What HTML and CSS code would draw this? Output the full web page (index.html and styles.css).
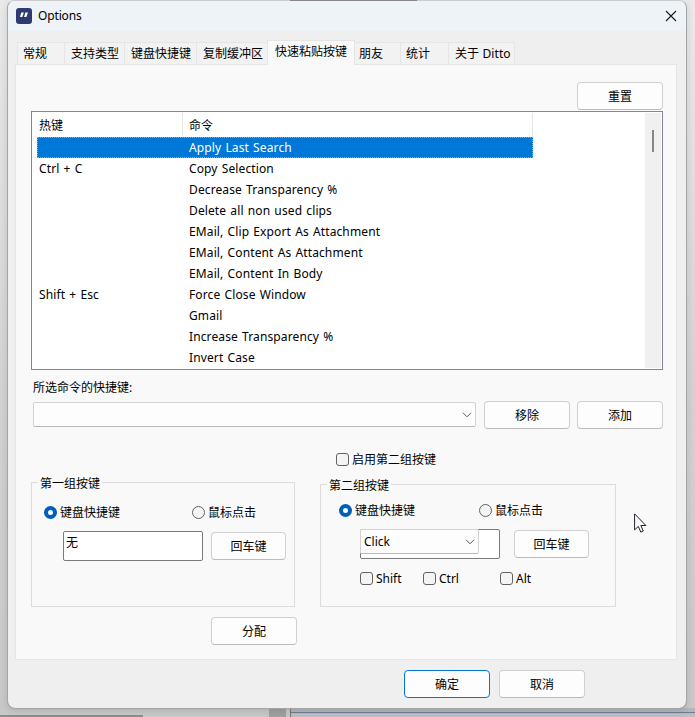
FILE: index.html
```html
<!DOCTYPE html>
<html lang="zh-CN">
<head>
<meta charset="utf-8">
<title>Options</title>
<link rel="stylesheet" href="styles.css">
</head>
<body>
<div class="backdrop"><i class="back-top"></i><i class="back-scroll"></i><i class="back-block"></i><i class="back-pane"></i></div>
<div class="window">
  <header class="titlebar">
    <svg class="logo" width="16" height="16" viewBox="0 0 16 16"><rect width="16" height="16" rx="3" fill="#2f3a72"/><path d="M5.2 4.5h2.7L6.3 9H4zM9.3 4.5H12L10.4 9H8.1z" fill="#fff"/></svg>
    <span class="title">Options</span>
    <svg class="close" width="12" height="12" viewBox="0 0 12 12"><path d="M1 1l10 10M11 1L1 11" stroke="#1a1a1a" stroke-width="1.1" fill="none"/></svg>
  </header>
  <nav class="tabs">
    <span class="tab t1">常规</span><span class="tab t2">支持类型</span><span class="tab t3">键盘快捷键</span><span class="tab t4">复制缓冲区</span><span class="tab active">快速粘贴按键</span><span class="tab t6">朋友</span><span class="tab t7">统计</span><span class="tab t8">关于 Ditto</span>
  </nav>
  <main class="panel">
    <div class="reset"><button class="btn">重置</button></div>
    <section class="list">
      <div class="table">
        <div class="row head"><span>热键</span><span>命令</span></div>
        <div class="row selected"><span></span><span>Apply Last Search</span></div>
        <div class="row"><span>Ctrl + C</span><span>Copy Selection</span></div>
        <div class="row"><span></span><span>Decrease Transparency %</span></div>
        <div class="row"><span></span><span>Delete all non used clips</span></div>
        <div class="row"><span></span><span>EMail, Clip Export As Attachment</span></div>
        <div class="row"><span></span><span>EMail, Content As Attachment</span></div>
        <div class="row"><span></span><span>EMail, Content In Body</span></div>
        <div class="row"><span>Shift + Esc</span><span>Force Close Window</span></div>
        <div class="row"><span></span><span>Gmail</span></div>
        <div class="row"><span></span><span>Increase Transparency %</span></div>
        <div class="row"><span></span><span>Invert Case</span></div>
      </div>
      <div class="scrollbar"><div class="thumb"></div></div>
    </section>
    <div class="label">所选命令的快捷键:</div>
    <div class="shortcut">
      <div class="combo wide"><svg width="10" height="6" viewBox="0 0 10 6"><path d="M1 .8l4 4 4-4" fill="none" stroke="#555"/></svg></div>
      <button class="btn">移除</button>
      <button class="btn">添加</button>
    </div>
    <label class="option enable"><i class="check"></i><span>启用第二组按键</span></label>
    <div class="groups">
      <section class="group first">
        <h2>第一组按键</h2>
        <div class="radios"><label class="option"><i class="radio on"></i><span>键盘快捷键</span></label><label class="option"><i class="radio"></i><span>鼠标点击</span></label></div>
        <div class="entry"><div class="edit">无</div><button class="btn small">回车键</button></div>
      </section>
      <section class="group second">
        <h2>第二组按键</h2>
        <div class="radios"><label class="option"><i class="radio on"></i><span>键盘快捷键</span></label><label class="option"><i class="radio"></i><span>鼠标点击</span></label></div>
        <div class="entry"><div class="edit"><div class="combo over"><span>Click</span><svg width="10" height="6" viewBox="0 0 10 6"><path d="M1 .8l4 4 4-4" fill="none" stroke="#555"/></svg></div></div><button class="btn small">回车键</button></div>
        <div class="mods"><label class="option"><i class="check"></i><span>Shift</span></label><label class="option"><i class="check"></i><span>Ctrl</span></label><label class="option"><i class="check"></i><span>Alt</span></label></div>
      </section>
    </div>
    <div class="assign"><button class="btn">分配</button></div>
  </main>
  <footer class="actions"><button class="btn primary">确定</button><button class="btn">取消</button></footer>
</div>
<svg class="cursor" width="13" height="21" viewBox="0 0 13 21"><path d="M.6.9v16l3.7-3.5 2.5 5.7 2.5-1.1-2.5-5.5h5.1z" fill="#fff" stroke="#1c1c2c"/></svg>
</body>
</html>
```

FILE: styles.css
```css
* { box-sizing: border-box; }
body {
  margin: 0;
  width: 695px;
  height: 717px;
  overflow: hidden;
  position: relative;
  font: 12px/16px "Noto Sans", "Noto Sans CJK SC", sans-serif;
  color: #000;
  white-space: nowrap;
}
.backdrop {
  position: absolute;
  inset: 0;
  background: linear-gradient(#e9e9e9, #d2d2d2 55%, #c8c8c8);
}
.backdrop i { position: absolute; }
.back-top { left: 290px; top: 0; width: 127px; height: 1px; background: #3d393d; }
.back-scroll { left: 0; top: 715px; width: 143px; height: 2px; background: #8d8d8d; }
.back-block { left: 269px; top: 708px; width: 17px; height: 9px; background: #a0a0a0; }
.back-pane { left: 290px; top: 708px; right: 0; height: 9px; background: linear-gradient(#b4b6ba 4px, #6b7c98 4px 5px, #bcbdc1 5px); border-left: 1px solid #777; }
.window {
  position: relative;
  display: flex;
  flex-direction: column;
  width: 680px;
  height: 709px;
  margin-left: 7px;
  border: 1px solid #a5a5a5;
  border-top-color: rgba(190,190,190,.6);
  border-radius: 8px;
  background: #efefef;
  background-clip: padding-box;
  overflow: hidden;
  box-shadow: 0 2px 7px rgba(0,0,0,.12);
}
.titlebar {
  display: flex;
  align-items: center;
  flex: none;
  height: 30px;
  padding: 0 9px 0 8px;
  background: #eef3f8;
}
.logo, .close { margin-top: -1px; }
.title { margin: 0 auto 0 6px; letter-spacing: -.15px; }
.tabs { display: flex; align-items: flex-end; flex: none; height: 33px; padding-left: 9px; }
.tab {
  height: 22px;
  padding: 3px 0 0 6px;
  border: 1px solid #e5e5e5;
  border-width: 1px 1px 0 0;
  background: #f2f2f2;
}
.t1 { width: 48px; border-left-width: 1px; padding-left: 5px; }
.t2 { width: 60px; }
.t3 { width: 72px; }
.t4 { width: 71px; }
.t6 { width: 46px; padding-left: 4px; }
.t7 { width: 48px; padding-left: 5px; }
.t8 { width: 66px; letter-spacing: .1px; }
.tab.active {
  position: relative;
  z-index: 1;
  width: 88px;
  height: 25px;
  margin: 0 0 -1px -1px;
  padding: 3px 0 0 7px;
  border-left-width: 1px;
  background: #f9f9f9;
}
.panel {
  flex: none;
  width: 662px;
  height: 596px;
  margin-left: 7px;
  padding: 17px 13px 0 15px;
  border: 1px solid #e5e5e5;
  background: #f9f9f9;
}
.reset { display: flex; justify-content: flex-end; margin-bottom: 1px; }
.btn {
  flex: none;
  width: 86px;
  height: 28px;
  padding: 1px 0 0;
  border: 1px solid #d0d0d0;
  border-bottom-color: #bbb;
  border-radius: 4px;
  background: #fdfdfd;
  color: #000;
  font: inherit;
}
.btn.small { width: 75px; }
.btn.primary { border-color: #0078d4; }
.list {
  display: flex;
  justify-content: space-between;
  width: 632px;
  height: 259px;
  padding: 1px;
  border: 1px solid #828790;
  background: #fff;
}
.table { padding-left: 4px; letter-spacing: .12px; word-spacing: .9px; }
.row { display: grid; grid-template-columns: 146px 350px; width: 496px; height: 21px; }
.row span { padding: 3px 0 0 6px; }
.row span:first-child { padding-left: 2px; }
.row.head { height: 24px; letter-spacing: 0; }
.head span { padding-top: 5px; border-right: 1px solid #e5e5e5; }
.row.selected { background: #0078d7; color: #fff; outline: 1px dotted #e99150; outline-offset: -1px; }
.scrollbar { width: 16px; background: #f0f0f0; }
.thumb { width: 2px; height: 22px; margin: 17px 0 0 7px; background: #868686; }
.label { height: 31px; padding: 10px 0 0 2px; }
.shortcut { display: flex; gap: 7px; padding-left: 2px; }
.shortcut .combo { margin-right: 1px; }
.combo {
  display: flex;
  align-items: center;
  justify-content: flex-end;
  height: 25px;
  padding-right: 3px;
  border: 1px solid #d2d2d2;
  border-bottom-color: #b8b8b8;
  border-radius: 2px;
  background: #fdfdfd;
}
.combo.wide { width: 443px; margin-top: 1px; }
.option { display: flex; align-items: center; gap: 3px; height: 16px; }
.option span { padding-top: 2px; }
.option i { flex: none; width: 13px; height: 13px; border: 1px solid #626262; background: #f4f4f4; }
.check { border-radius: 3px; }
.radio { border-radius: 50%; }
.option .radio.on { border: 4px solid #005fb8; background: #fff; }
.enable { margin: 22px 0 0 305px; }
.groups { display: flex; align-items: flex-end; gap: 25px; height: 140px; }
.group { border: 1px solid #dcdcdc; }
.first { width: 264px; height: 125px; }
.second { width: 296px; height: 123px; }
.group h2 { width: 64px; height: 16px; margin: -8px 0 0 6px; padding-left: 2px; background: #f9f9f9; font: inherit; line-height: 18px; }
.radios { display: flex; }
.first .radios { margin: 13px 0 0 12px; }
.second .radios { margin: 9px 0 0 18px; }
.first .option:first-child { width: 148px; }
.second .radios .option:first-child { width: 140px; }
.entry { display: flex; align-items: center; }
.first .entry { margin: 11px 0 0 31px; gap: 8px; }
.second .entry { margin: 11px 0 0 39px; gap: 14px; }
.edit { position: relative; width: 140px; height: 30px; padding: 3px 2px; border: 1px solid #7a7a7a; border-radius: 2px; background: #fff; }
.combo.over { position: absolute; left: -1px; top: -1px; width: 119px; padding-left: 3px; justify-content: space-between; }
.mods { display: flex; margin: 11px 0 0 39px; }
.mods .option:nth-child(1) { width: 63px; }
.mods .option:nth-child(2) { width: 77px; }
.assign { margin: 10px 0 0 180px; }
.actions { display: flex; justify-content: flex-end; gap: 9px; padding: 10px 101px 0 0; }
.cursor { position: absolute; left: 634px; top: 513px; }
```
